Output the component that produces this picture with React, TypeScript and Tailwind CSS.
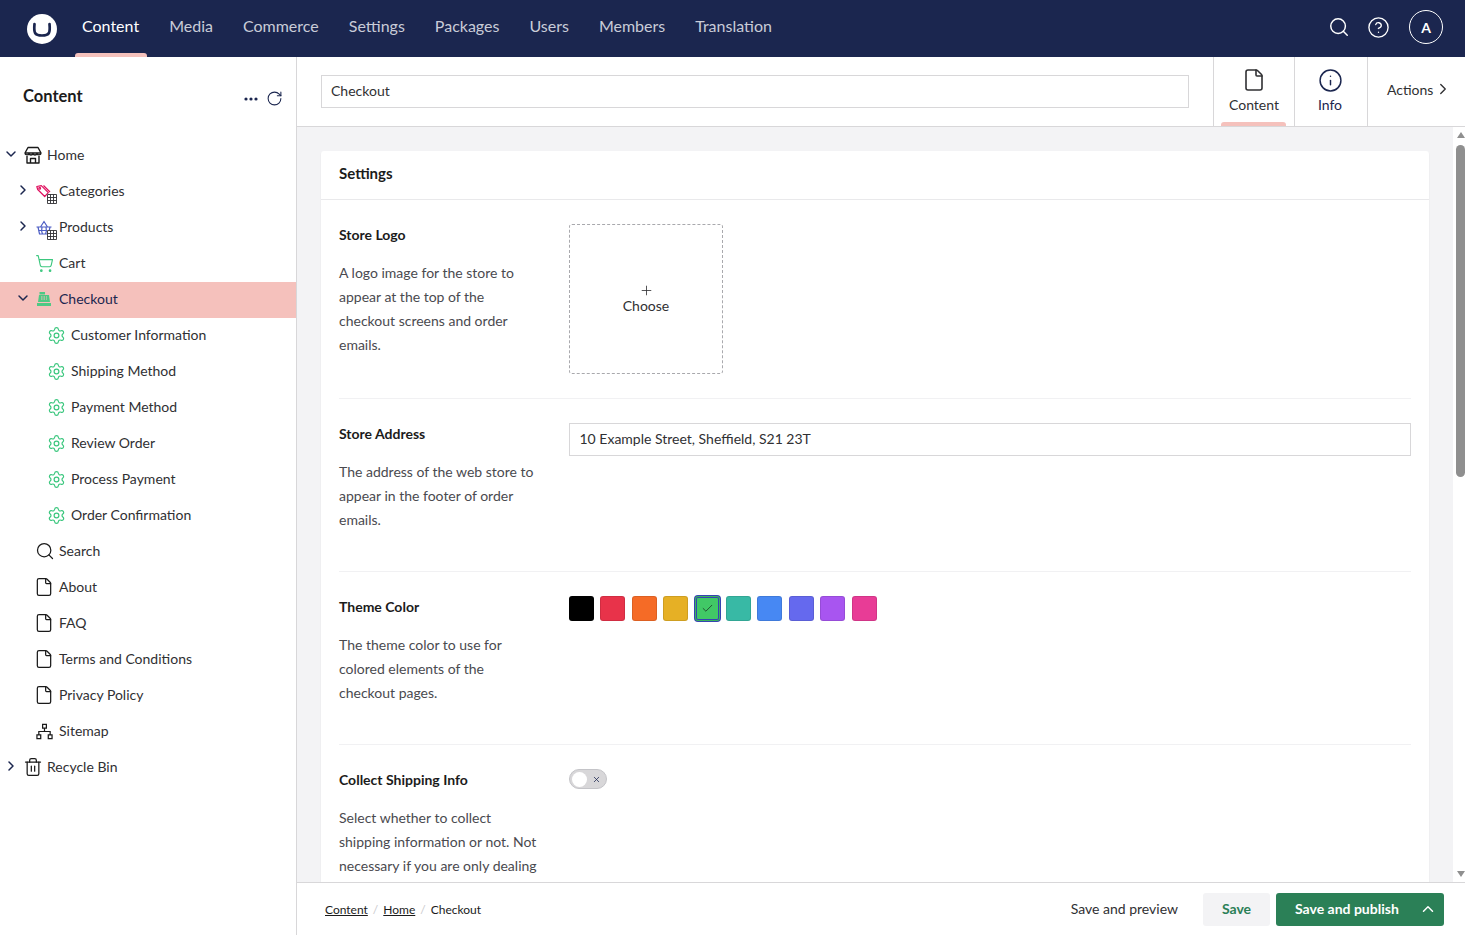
import React from 'react';
import {
  ChevronDown,
  ChevronRight,
  ChevronUp,
  CircleHelp,
  Check,
  File,
  Info,
  Plus,
  RotateCw,
  Search,
  Settings,
  ShoppingCart,
  Trash2,
  X,
} from 'lucide-react';

const navItems = ['Content', 'Media', 'Commerce', 'Settings', 'Packages', 'Users', 'Members', 'Translation'];

const GridBadge = () => (
  <svg viewBox="0 0 10 10" className="absolute left-[11px] top-[11px] h-[10px] w-[10px] bg-white" fill="none" stroke="#303033" strokeWidth="0.9">
    <path d="M.5.5h9v9h-9zM3.500.5v9M6.500.5v9M.5 3.500h9M.5 6.500h9" />
  </svg>
);

const StoreIcon = () => (
  <svg viewBox="0 0 18 18" className="h-[18px] w-[18px]" fill="none" stroke="#1a1a1a" strokeWidth="1.400" strokeLinejoin="round">
    <path d="M4 1.500h10l3 5.500c0 2.400-3.400 2.400-4 .5-.6 1.900-3.400 1.900-4 0-.6 1.900-3.400 1.900-4 0-.6 1.900-4 1.900-4-.5z" />
    <path d="M1 7h16M3 10v7h12v-7M6.500 17v-4.500h5V17" />
  </svg>
);

const TagIcon = () => (
  <span className="relative block h-4 w-4">
    <svg viewBox="0 0 16 16" className="h-4 w-4" fill="none" stroke="#e0115f" strokeWidth="1.200" strokeLinejoin="round">
      <path d="M.8 3.500l4.500-.9 7 7-3.600 3.900-7-7z" />
      <circle cx="3.700" cy="5.300" r="0.900" />
      <path d="M7.500 2.500l6.500 6.500" />
    </svg>
    <GridBadge />
  </span>
);

const BasketIcon = () => (
  <span className="relative block h-4 w-4">
    <svg viewBox="0 0 16 16" className="h-4 w-4" fill="none" stroke="#4c5dc4" strokeWidth="1.200">
      <path d="M.5 8h15M2 8l1.500 7h9L14 8M4.500 8L8 2.500 11.500 8M6 8c-.5 2-.5 5 .5 7M10 8c.5 2 .5 5-.5 7M2.500 11.500h11" />
    </svg>
    <GridBadge />
  </span>
);

const RegisterIcon = () => (
  <svg viewBox="0 0 16 16" className="h-4 w-4" fill="#4ec984">
    <path d="M3.500 1h5.500v2.500H3.500zM3 4h10l1 7H2zM1 12h14v3H1z" />
    <path d="M5 5.500h1.500v1H5zM7.500 5.500H9v1H7.500zM10 5.500h1v1h-1zM5 7.500h1.500v1H5zM7.500 7.500H9v1H7.500zM10 7.500h1v1h-1z" fill="#f5c1bc" />
  </svg>
);

const SitemapIcon = () => (
  <svg viewBox="0 0 18 18" className="h-[17px] w-[17px]" fill="none" stroke="#1a1a1a" strokeWidth="1.300">
    <path d="M7 1.500h4v4H7zM1 12.500h4v4H1zM13 12.500h4v4h-4zM9 5.500v3.500M3 12.500V9h12v3.500" />
  </svg>
);

const gear = <Settings size={19} strokeWidth={1.5} className="-ml-[1px] text-[#3bc77e]" />;
const page = <File size={20} strokeWidth={1.5} className="-ml-[2px] text-[#1a1a1a]" />;

type TreeRow = {
  label: string;
  level: number;
  icon: React.ReactNode;
  caret?: 'open' | 'closed';
  active?: boolean;
};

const treeRows: TreeRow[] = [
  { label: 'Home', level: 0, caret: 'open', icon: <StoreIcon /> },
  { label: 'Categories', level: 1, caret: 'closed', icon: <TagIcon /> },
  { label: 'Products', level: 1, caret: 'closed', icon: <BasketIcon /> },
  { label: 'Cart', level: 1, icon: <ShoppingCart size={19} strokeWidth={1.400} className="-ml-[1px] text-[#3bc77e]" /> },
  { label: 'Checkout', level: 1, caret: 'open', icon: <RegisterIcon />, active: true },
  { label: 'Customer Information', level: 2, icon: gear },
  { label: 'Shipping Method', level: 2, icon: gear },
  { label: 'Payment Method', level: 2, icon: gear },
  { label: 'Review Order', level: 2, icon: gear },
  { label: 'Process Payment', level: 2, icon: gear },
  { label: 'Order Confirmation', level: 2, icon: gear },
  { label: 'Search', level: 1, icon: <Search size={20} strokeWidth={1.500} className="-ml-[1px] text-[#1a1a1a]" /> },
  { label: 'About', level: 1, icon: page },
  { label: 'FAQ', level: 1, icon: page },
  { label: 'Terms and Conditions', level: 1, icon: page },
  { label: 'Privacy Policy', level: 1, icon: page },
  { label: 'Sitemap', level: 1, icon: <SitemapIcon /> },
  { label: 'Recycle Bin', level: 0, caret: 'closed', icon: <Trash2 size={20} strokeWidth={1.500} className="-ml-[1px] text-[#1a1a1a]" /> },
];

const swatches = ['bg-[#000000]', 'bg-[#e8334a]', 'bg-[#f56b26]', 'bg-[#e6b025]', 'bg-[#41c866]', 'bg-[#38b9a5]', 'bg-[#4788f3]', 'bg-[#6569ee]', 'bg-[#a855f0]', 'bg-[#e83c96]'];

const Tree = () => (
  <div className="mt-[23px] flex flex-col">
    {treeRows.map((row) => (
      <div
        key={row.label}
        className={`flex h-9 items-center pb-[2px] ${row.active ? 'bg-[#f5c1bc] text-[#1b264f]' : 'text-[#303033]'}`}
        style={{ paddingLeft: `${row.level * 12 + 5}px` }}
      >
        <span className="flex w-[19px] shrink-0 -translate-y-[1px] items-center text-[#1b264f]">
          {row.caret === 'open' && <ChevronDown size={16} strokeWidth={2.200} className="-ml-[2px] shrink-0" />}
          {row.caret === 'closed' && <ChevronRight size={16} strokeWidth={2.200} className="-ml-[2px] shrink-0" />}
        </span>
        <span className="flex w-[23px] shrink-0 items-center">{row.icon}</span>
        <span className="text-[14px] leading-5">{row.label}</span>
      </div>
    ))}
  </div>
);

const Property = ({ title, lines, children, height, last }: { title: string; lines: string[]; children?: React.ReactNode; height: string; last?: boolean }) => (
  <div className={`flex ${height} ${last ? '' : 'border-b border-[#f1f1f3]'}`}>
    <div className="w-[230px] shrink-0 pr-5">
      <div className="mt-[1px] text-[14px] font-bold leading-5 text-[#1b1b1b]">{title}</div>
      <div className="mt-4 text-[14px] leading-6 text-[#4a4a4f]">
        {lines.map((line) => (
          <div key={line} className="whitespace-nowrap">{line}</div>
        ))}
      </div>
    </div>
    <div className="min-w-0 flex-1">{children}</div>
  </div>
);

export default function App() {
  return (
    <div className="flex h-[935px] w-[1465px] flex-col overflow-hidden bg-white font-['Lato','Open_Sans',sans-serif] text-[#303033]">
      <header className="flex h-[57px] shrink-0 items-center bg-[#1b264f] pl-[27px] pr-[22px]">
        <svg viewBox="0 0 30 30" className="h-[30px] w-[30px] shrink-0">
          <circle cx="15" cy="15" r="15" fill="#fff" />
          <path d="M7.500 10c-.4 4-.4 7 .6 9 1 1.700 3.400 2.500 6.900 2.500s5.900-.8 6.900-2.500c1-2 1-5 .6-9" fill="none" stroke="#1b264f" strokeWidth="2.700" strokeLinecap="round" />
        </svg>
        <nav className="ml-[10px] flex h-full items-stretch">
          {navItems.map((item, i) => (
            <div key={item} className={`relative flex items-center px-[15px] pb-[6px] text-[16px] ${i === 0 ? 'text-white' : 'text-[#c9ccd8]'}`}>
              {item}
              {i === 0 && <span className="absolute bottom-0 left-[8px] right-[7px] h-1 rounded-t-[3px] bg-[#f5c1bc]" />}
            </div>
          ))}
        </nav>
        <div className="ml-auto flex items-center pb-[3px] text-white">
          <Search size={22} strokeWidth={1.600} />
          <CircleHelp size={23} strokeWidth={1.400} className="ml-[17px]" />
          <span className="ml-[19px] flex h-[34px] w-[34px] items-center justify-center rounded-full border border-white text-[14px] font-bold">A</span>
        </div>
      </header>

      <div className="flex min-h-0 flex-1">
        <aside className="w-[297px] shrink-0 border-r border-[#d8d7d9]">
          <div className="flex h-[58px] items-end pb-[7px] pl-[23px] pr-[13px]">
            <h1 className="text-[16.500px] font-bold leading-6 text-[#1b1b1b]">Content</h1>
            <svg viewBox="0 0 14 4" className="mb-[7px] ml-auto h-1 w-[14px]" fill="#1b264f">
              <circle cx="2" cy="2" r="1.600" />
              <circle cx="7" cy="2" r="1.600" />
              <circle cx="12" cy="2" r="1.600" />
            </svg>
            <RotateCw size={17} strokeWidth={1.500} className="mb-[1px] ml-2 text-[#1b264f]" />
          </div>
          <Tree />
        </aside>

        <main className="flex min-w-0 flex-1 flex-col">
          <div className="flex h-[70px] shrink-0 border-b border-[#d8d7d9]">
            <div className="flex flex-1 items-center px-6 pb-[1px]">
              <div className="flex h-[33px] w-full items-center border border-[#d8d7d9] px-[9px] pb-[2px] text-[14px] text-[#303033]">Checkout</div>
            </div>
            <div className="relative flex w-[81px] flex-col items-center border-l border-[#d8d7d9] pt-[11px] text-[#303033]">
              <File size={24} strokeWidth={1.600} />
              <span className="mt-[3px] text-[14px] leading-5">Content</span>
              <span className="absolute bottom-0 left-[7px] right-[8px] h-1 rounded-t-[3px] bg-[#f5c1bc]" />
            </div>
            <div className="flex w-[73px] flex-col items-center border-l border-[#d8d7d9] pt-[11px] text-[#1b264f]">
              <Info size={25} strokeWidth={1.400} className="-translate-x-[1px]" />
              <span className="mt-[2px] -translate-x-[1px] text-[14px] leading-5">Info</span>
            </div>
            <div className="flex w-[98px] items-center border-l border-[#d8d7d9] pb-[5px] pl-[19px] text-[14px] text-[#303033]">
              Actions
              <ChevronRight size={18} strokeWidth={1.800} className="ml-[1px]" />
            </div>
          </div>

          <div className="flex min-h-0 flex-1">
            <div className="min-w-0 flex-1 overflow-hidden bg-[#f3f3f5] pb-6 pl-6 pr-6 pt-6">
              <section className="rounded-[3px] bg-white shadow-[0_1px_1px_rgba(0,0,0,0.16)]">
                <div className="flex h-[49px] items-center border-b border-[#e9e9eb] px-[18px] pb-[4px] text-[15px] font-bold text-[#1b1b1b]">Settings</div>
                <div className="px-[18px] pt-6">
                  <Property title="Store Logo" height="h-[175px]" lines={['A logo image for the store to', 'appear at the top of the', 'checkout screens and order', 'emails.']}>
                    <div className="flex h-[150px] w-[154px] flex-col items-center justify-center rounded-[3px] border border-dashed border-[#a9a9ad] pt-[1px] text-[14px] text-[#303033]">
                      <Plus size={15} strokeWidth={1.300} className="-mb-[2px]" />
                      <span className="leading-5">Choose</span>
                    </div>
                  </Property>
                  <div className="h-6" />
                  <Property title="Store Address" height="h-[149px]" lines={['The address of the web store to', 'appear in the footer of order', 'emails.']}>
                    <div className="flex h-[33px] items-center border border-[#d8d7d9] px-[9.500px] pb-[2px] text-[14px] text-[#303033]">10 Example Street, Sheffield, S21 23T</div>
                  </Property>
                  <div className="h-6" />
                  <Property title="Theme Color" height="h-[149px]" lines={['The theme color to use for', 'colored elements of the', 'checkout pages.']}>
                    <div className="flex gap-[6.400px]">
                      {swatches.map((color, i) => (
                        <span key={color} className={`flex h-[25px] w-[25px] items-center justify-center rounded-[3px] border border-black/10 ${color} ${i === 4 ? 'shadow-[0_0_0_1px_#3544b1,inset_0_0_0_1px_#3544b1]' : ''}`}>
                          {i === 4 && <Check size={13} strokeWidth={1.500} className="text-[#1b3a26]" />}
                        </span>
                      ))}
                    </div>
                  </Property>
                  <div className="h-6" />
                  <Property title="Collect Shipping Info" height="h-[149px]" last lines={['Select whether to collect', 'shipping information or not. Not', 'necessary if you are only dealing']}>
                    <div className="flex h-[20px] w-[38px] items-center justify-between rounded-full border border-[#c4c4c8] bg-[#d8d7d9] px-[2px]">
                      <span className="h-[15px] w-[15px] rounded-full bg-white" />
                      <X size={9} strokeWidth={2} className="mr-[3px] text-[#1b264f]" />
                    </div>
                  </Property>
                </div>
              </section>
            </div>
            <div className="flex w-3 shrink-0 flex-col items-center bg-white pl-[3px]">
              <span className="mt-[5px] h-0 w-0 border-x-[4.500px] border-b-[6px] border-x-transparent border-b-[#8f8f8f]" />
              <span className="mt-[7px] h-[332px] w-[9px] rounded-full bg-[#8f8f8f]" />
              <span className="mb-[5px] mt-auto h-0 w-0 border-x-[4.500px] border-t-[6px] border-x-transparent border-t-[#8f8f8f]" />
            </div>
          </div>

          <footer className="flex h-[53px] shrink-0 items-center border-t border-[#d8d7d9] pl-7 pr-[21px]">
            <div className="flex items-center pt-[2px] text-[12px] text-[#1b1b1b]">
              <span className="underline">Content</span>
              <span className="mx-[5px] text-[#c9c9cc]">/</span>
              <span className="underline">Home</span>
              <span className="mx-[5px] text-[#c9c9cc]">/</span>
              <span>Checkout</span>
            </div>
            <span className="ml-auto pb-[2px] text-[14px] text-[#303033]">Save and preview</span>
            <span className="ml-[25px] flex h-[33px] w-[67px] items-center justify-center rounded-[3px] bg-[#f3f3f5] pb-[2px] text-[14px] font-bold text-[#2b8057]">Save</span>
            <span className="ml-[6px] flex h-[33px] w-[168px] items-center rounded-[3px] bg-[#2b8057] pl-[19px] text-[14px] font-bold text-white">
              <span className="pb-[2px]">Save and publish</span>
              <ChevronUp size={18} strokeWidth={2} className="ml-auto mr-[7px]" />
            </span>
          </footer>
        </main>
      </div>
    </div>
  );
}
